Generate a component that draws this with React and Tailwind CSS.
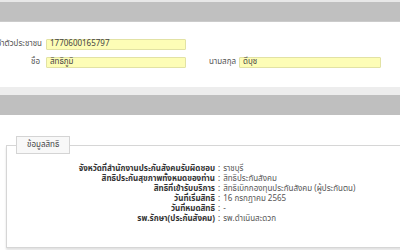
const rows = [
  ["จังหวัดที่สำนักงานประกันสังคมรับผิดชอบ", "ราชบุรี"],
  ["สิทธิประกันสุขภาพทั้งหมดของท่าน", "สิทธิประกันสังคม"],
  ["สิทธิที่เข้ารับบริการ", "สิทธิเบิกกองทุนประกันสังคม (ผู้ประกันตน)"],
  ["วันที่เริ่มสิทธิ", "16 กรกฎาคม 2565"],
  ["วันที่หมดสิทธิ", "-"],
  ["รพ.รักษา(ประกันสังคม)", "รพ.ดำเนินสะดวก"],
];

function Field({ value, width = "w-[140px]" }) {
  return (
    <div
      className={`${width} h-[11px] bg-[#fdfdb6] border border-[#e2e2a4] rounded-[1px] px-[3px] text-[8px] leading-[9px] text-[#444]`}
    >
      {value}
    </div>
  );
}

export default function App() {
  return (
    <div
      className="w-[400px] h-[250px] overflow-hidden bg-white"
      style={{ fontFamily: "Tahoma, 'Noto Sans Thai', 'Noto Sans', 'DejaVu Sans', sans-serif" }}
    >
      <div className="h-[2px] bg-[#e8e8e8]" />
      <div className="h-[20px] bg-[#c0c0c0] border-b border-[#cbcbcb]" />

      <div className="mt-[16px] flex items-center">
        <div className="w-[42px] flex justify-end whitespace-nowrap text-[8px] text-[#555]">
          เลขประจำตัวประชาชน
        </div>
        <div className="ml-[4px]">
          <Field value="1770600165797" />
        </div>
      </div>

      <div className="mt-[6px] flex items-center">
        <div className="w-[40px] flex justify-end whitespace-nowrap text-[8px] text-[#555]">
          ชื่อ
        </div>
        <div className="ml-[6px]">
          <Field value="สิทธิภูมิ" />
        </div>
        <div className="ml-[23px] w-[20px] whitespace-nowrap text-[8px] text-[#555]">นามสกุล</div>
        <div className="ml-[10px]">
          <Field value="ดีบุช" width="w-[142px]" />
        </div>
      </div>

      <div className="mt-[19px] h-[8px] bg-[#ededed]" />
      <div className="h-[20px] bg-[#bfbfbf]" />

      <fieldset className="mt-[21px] ml-[6px] w-[404px] border border-[#d6d6d6] pb-[23px] pt-[10px] shadow-[0_2px_2px_rgba(0,0,0,0.12)]">
        <legend className="ml-[9px] h-[18px] px-[10px] border border-[#d4d4d4] bg-[#f8f8f8] text-[8px] leading-[16px] text-[#444]">
          ข้อมูลสิทธิ
        </legend>
        {rows.map(([label, value]) => (
          <div key={label} className="flex h-[10px] items-center text-[8px] leading-[10px] whitespace-nowrap">
            <div className="w-[208px] text-right font-bold text-[#333]">{label}</div>
            <div className="px-[3px] text-[#333]">:</div>
            <div className="text-[#555]">{value}</div>
          </div>
        ))}
      </fieldset>
    </div>
  );
}
